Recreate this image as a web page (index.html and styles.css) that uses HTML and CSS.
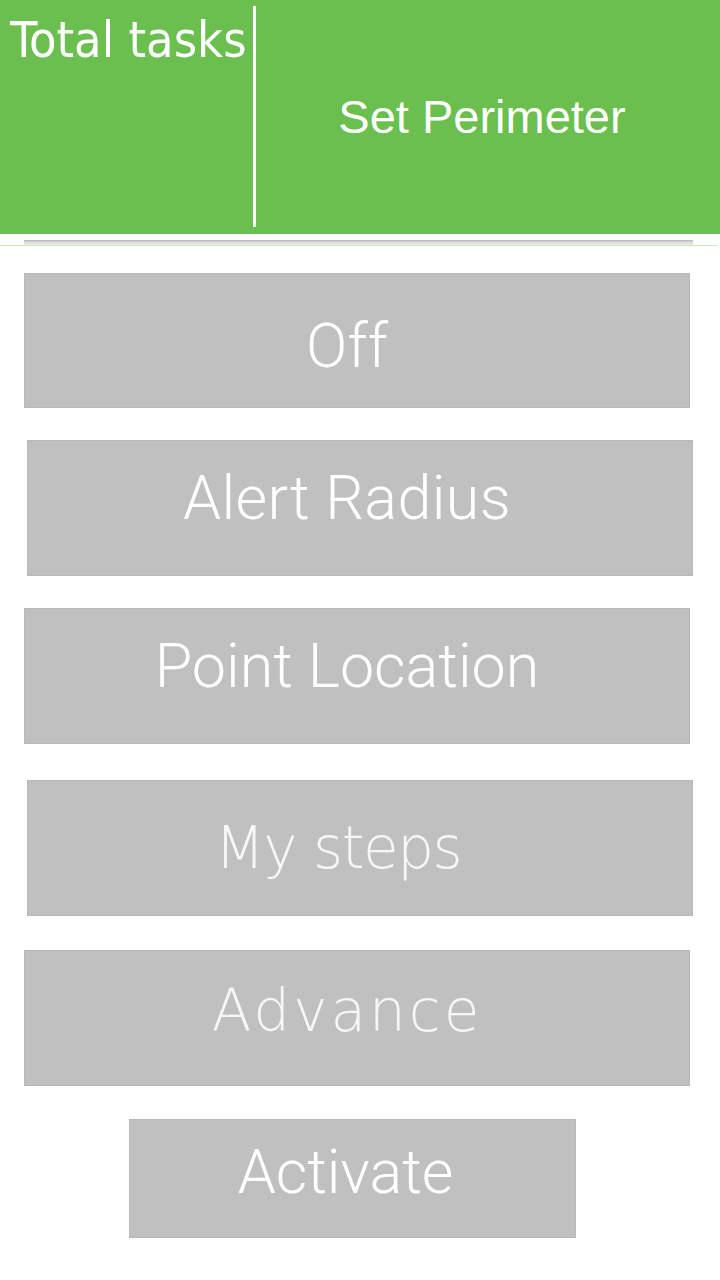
FILE: index.html
```html
<!DOCTYPE html>
<html lang="en">
<head>
<meta charset="utf-8">
<title>Set Perimeter</title>
<link rel="stylesheet" href="styles.css">
</head>
<body>
<header class="top">
  <div class="top-left">Total tasks</div>
  <div class="top-divider"></div>
  <div class="top-right">Set Perimeter</div>
</header>
<div class="strip">
  <div class="strip-bar"></div>
  <div class="strip-line"></div>
</div>
<main class="list">
  <div class="btn btn-a btn-off"><span class="label label-sans">Off</span></div>
  <div class="btn btn-b btn-up"><span class="label label-sans label-alert">Alert Radius</span></div>
  <div class="btn btn-a btn-up"><span class="label label-sans">Point Location</span></div>
  <div class="btn btn-b btn-gap4 btn-steps"><span class="label label-geo label-steps">My steps</span></div>
  <div class="btn btn-a btn-gap2 btn-up-sm"><span class="label label-geo label-adv">Advance</span></div>
  <div class="btn btn-c btn-gap1 btn-up-sm"><span class="label label-sans">Activate</span></div>
</main>
</body>
</html>
```
FILE: styles.css
```css
html, body {
  margin: 0;
  padding: 0;
  background: #ffffff;
}
body {
  width: 720px;
  height: 1280px;
  overflow: hidden;
  font-family: "Liberation Sans", Arial, sans-serif;
}
.top {
  display: flex;
  height: 234px;
  background: #6abf4e;
  color: #ffffff;
}
.top-left {
  width: 243px;
  padding: 11px 0 0 10px;
  font-family: "DejaVu Sans Condensed", "DejaVu Sans", sans-serif;
  font-stretch: condensed;
  font-size: 50px;
  line-height: 58px;
  white-space: nowrap;
}
.top-divider {
  width: 3px;
  margin: 6px 0 7px;
  background: #ffffff;
}
.top-right {
  flex: 1;
  display: flex;
  align-items: center;
  justify-content: center;
  padding-right: 12px;
  font-family: "Liberation Sans", Arial, sans-serif;
  font-size: 47px;
  line-height: 54px;
}
.strip {
  padding-top: 6px;
}
.strip-bar {
  margin-left: 24px;
  width: 669px;
  height: 5px;
  background: linear-gradient(#b4b4b4, #d8d8d8 40%, #ececec);
}
.strip-line {
  width: 717px;
  height: 1px;
  background: #c6ecbd;
}
.list {
  display: flex;
  flex-direction: column;
  align-items: flex-start;
  gap: 32px;
  padding-top: 27px;
}
.btn {
  box-sizing: border-box;
  height: 136px;
  width: 666px;
  display: flex;
  align-items: center;
  justify-content: center;
  background: #c0c0c0;
  border: 1px solid #b8b8b8;
  color: #ffffff;
}
.btn-a { margin-left: 24px; padding-right: 20px; }
.btn-b { margin-left: 27px; padding-right: 26px; }
.btn-c {
  margin-left: 129px;
  width: 447px;
  height: 119px;
  padding-right: 14px;
}
.btn-steps { padding-right: 44px; }
.btn-off { height: 135px; padding-top: 10px; }
.btn-up { padding-bottom: 20px; }
.btn-up-sm { padding-bottom: 14px; }
.btn-gap4 { margin-top: 4px; }
.btn-gap2 { margin-top: 2px; }
.btn-gap1 { margin-top: 1px; }
.label {
  white-space: nowrap;
}
.label-sans {
  font-family: Roboto, "Liberation Sans", Arial, sans-serif;
  font-weight: 300;
  font-size: 61px;
  line-height: 70px;
}
.label-alert { letter-spacing: 0.4px; }
.label-geo {
  font-family: "DejaVu Sans", sans-serif;
  font-weight: 200;
  font-size: 58px;
  line-height: 68px;
  color: #f7f7f7;
}
.label-steps { letter-spacing: -1.5px; }
.label-adv { letter-spacing: 3px; }
```
